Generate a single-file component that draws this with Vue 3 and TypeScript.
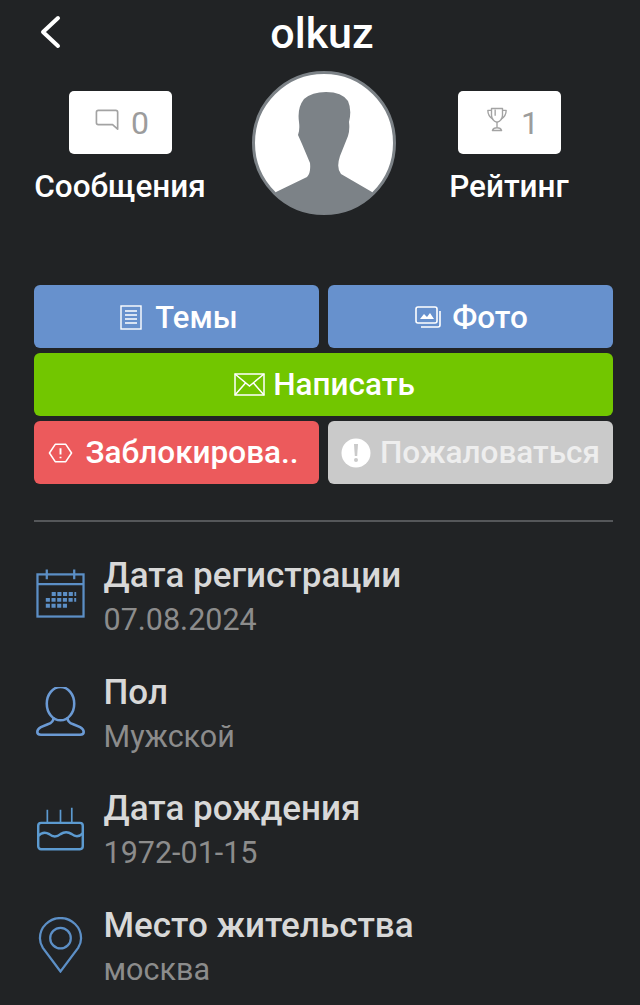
<script setup lang="ts">
const rows = [
  { key: 'cal', title: 'Дата регистрации', value: '07.08.2024' },
  { key: 'user', title: 'Пол', value: 'Мужской' },
  { key: 'cake', title: 'Дата рождения', value: '1972-01-15' },
  { key: 'pin', title: 'Место жительства', value: 'москва' },
]
</script>

<template>
  <div class="page">
    <header class="head">
      <svg class="back" viewBox="0 0 24 34" width="24" height="34" fill="none" stroke="#fff" stroke-width="4" stroke-linecap="round" stroke-linejoin="round">
        <path d="M20 3 L5 17 L20 31" />
      </svg>
      <h1 class="title">olkuz</h1>
    </header>

    <section class="stats">
      <div class="stat">
        <div class="stat-box msg">
          <svg width="25" height="24" viewBox="0 0 26 26" fill="none" stroke="#a3a3a3" stroke-width="1.8" stroke-linejoin="round">
            <path d="M3 2.5 H22 Q24 2.5 24 4.5 V23 L18.5 18 H3 Q1 18 1 16 V4.5 Q1 2.5 3 2.5 Z" />
          </svg>
          <span class="stat-num">0</span>
        </div>
        <div class="stat-label">Сообщения</div>
      </div>

      <svg class="avatar" viewBox="252 71 144 144" width="144" height="144">
        <defs><clipPath id="ava"><circle cx="324" cy="143" r="71" /></clipPath></defs>
        <circle cx="324" cy="143" r="70.5" fill="#fff" stroke="#7c8287" stroke-width="3" />
        <path clip-path="url(#ava)" fill="#7c8287" d="M276 192 L307 177 Q311 173 310 163 L302 144 L298 135 Q300 130 299 122 Q297 108 304 99 Q312 92 326 92 Q342 92 348 101 Q352 110 349 122 Q350 130 348 136 L340 156 Q336 168 341 174 L372 192 L372 220 L276 220 Z" />
      </svg>

      <div class="stat stat-right">
        <div class="stat-box trophy">
          <svg width="22" height="27" viewBox="0 0 24 28" fill="none" stroke="#a3a3a3" stroke-width="1.5" stroke-linejoin="round">
            <path d="M6 2 H18 V9 Q18 15 12 17 Q6 15 6 9 Z" />
            <path d="M6 4 H2 Q2 11 8 14 M18 4 H22 Q22 11 16 14" />
            <path d="M10 3 V10 M12 17 V23 M7 26 Q8 23 12 23 Q16 23 17 26 Z" />
          </svg>
          <span class="stat-num">1</span>
        </div>
        <div class="stat-label">Рейтинг</div>
      </div>
    </section>

    <nav class="actions">
      <a class="btn blue themes">
        <svg width="22" height="25" viewBox="0 0 22 25" fill="none" stroke="#fff" stroke-width="1.4">
          <rect x="1" y="1" width="20" height="23" />
          <path d="M5 6 H17 M5 10 H17 M5 14 H17 M5 18 H17" />
        </svg>
        <span>Темы</span>
      </a>
      <a class="btn blue photo">
        <svg width="26" height="22" viewBox="0 0 26 22" fill="none" stroke="#fff" stroke-width="1.6">
          <rect x="1" y="1" width="21" height="16" rx="2" />
          <path d="M25 5 V19 Q25 21 23 21 H6" />
          <path d="M5 13 L9 8 L12 11 L15 7 L19 13 Z" fill="#fff" stroke="none" />
        </svg>
        <span>Фото</span>
      </a>
      <a class="btn green wide">
        <svg width="31" height="23" viewBox="0 0 31 23" fill="none" stroke="#fff" stroke-width="1.5">
          <rect x="1" y="1" width="29" height="21" />
          <path d="M1 1 L15.5 13 L30 1 M1 22 L11.5 10 M30 22 L19.5 10" />
        </svg>
        <span>Написать</span>
      </a>
      <a class="btn red">
        <svg width="25" height="22" viewBox="0 0 26 22" fill="none" stroke="#fff" stroke-width="1.6" stroke-linejoin="round">
          <path d="M7.5 2 H18.5 L24.5 11 L18.5 20 H7.5 L1.5 11 Z" />
          <path d="M13 6 V12.5 M13 15 V16.5" stroke-width="2" />
        </svg>
        <span>Заблокирова..</span>
      </a>
      <a class="btn grey">
        <svg width="30" height="30" viewBox="0 0 30 30">
          <circle cx="15" cy="15" r="14.5" fill="#fff" />
          <path d="M13 6 H17 L16.2 18 H13.8 Z" fill="#cacaca" />
          <circle cx="15" cy="22" r="2" fill="#cacaca" />
        </svg>
        <span>Пожаловаться</span>
      </a>
    </nav>

    <hr class="divider" />

    <ul class="info">
      <li v-for="row in rows" :key="row.key" class="row">
        <div class="row-icon" :class="'icon-' + row.key">
          <svg v-if="row.key === 'cal'" width="49" height="50" viewBox="0 0 50 50" fill="none" stroke="#5c8fc6" stroke-width="2.3">
            <rect x="1.5" y="5" width="47" height="43" />
            <path d="M1.5 15 H48.5 M11 0 V10 M39 0 V10" />
            <path d="M16 25 H41 M10 31 H41 M10 37 H33" stroke-width="4" stroke-dasharray="4.2 1.6" />
          </svg>
          <svg v-else-if="row.key === 'user'" width="49" height="49" viewBox="0 0 50 50" fill="none" stroke="#6b9ad4" stroke-width="2.6">
            <ellipse cx="25" cy="17" rx="14" ry="17" />
            <path d="M18 31 Q18 36 12 38 L5 41 Q1.3 43 1.3 46 Q1.3 48.7 5 48.7 H45 Q48.7 48.7 48.7 46 Q48.7 43 45 41 L38 38 Q32 36 32 31" />
          </svg>
          <svg v-else-if="row.key === 'cake'" width="49" height="47" viewBox="0 0 50 50" fill="none" stroke="#5c9ad0" stroke-width="2.6">
            <rect x="1.3" y="19" width="47.4" height="28" rx="3" />
            <path d="M1 33 Q7 27 13 31 Q19 36 25 31 Q31 27 37 31 Q43 36 49 30" />
            <path d="M11 5 V19 M25 5 V19 M37 3 V19" stroke-width="1.8" />
          </svg>
          <svg v-else width="49" height="56" viewBox="0 0 50 56" fill="none" stroke="#5c8fc6" stroke-width="2.3">
            <path d="M25 55 L7 31 Q4 26 4 21 A21 20.5 0 0 1 46 21 Q46 26 43 31 Z" />
            <circle cx="25" cy="21" r="10.5" />
          </svg>
        </div>
        <div class="row-text">
          <div class="row-title">{{ row.title }}</div>
          <div class="row-value">{{ row.value }}</div>
        </div>
      </li>
    </ul>
  </div>
</template>

<style>
html, body { background: #212325; }
</style>

<style scoped>
.page {
  width: 640px;
  height: 1005px;
  overflow: hidden;
  box-sizing: border-box;
  background: #212325;
  padding: 0 27px 0 34px;
  font-family: Roboto, "Noto Sans", sans-serif;
  color: #fff;
}
.head {
  position: relative;
  height: 66px;
  display: flex;
  align-items: center;
  justify-content: center;
}
.back {
  position: absolute;
  left: 4px;
  top: 15px;
}
.title {
  margin: 0 0 0 -3px;
  font-size: 43px;
  font-weight: 500;
  line-height: 66px;
}
.stats {
  display: grid;
  grid-template-columns: 172px 189px 201px;
  align-items: start;
  height: 214px;
  padding-top: 5px;
}
.stat {
  display: flex;
  flex-direction: column;
  align-items: center;
  padding-top: 20px;
}
.avatar { margin-left: 45.5px; }
.stat-right { padding-left: 27px; }
.stat-box {
  width: 103px;
  height: 63px;
  box-sizing: border-box;
  background: #fff;
  border-radius: 5px;
  display: flex;
  align-items: center;
  justify-content: center;
  gap: 12px;
  color: #9c9c9c;
  font-size: 32px;
}
.msg { padding-left: 4px; gap: 11px; }
.trophy { padding-left: 7px; gap: 13px; }
.stat-box svg { margin-top: -6px; }
.stat-label {
  margin-top: 14px;
  font-size: 31.5px;
  font-weight: 500;
  line-height: 38px;
  white-space: nowrap;
}
.stat-num { line-height: 1; }
.actions {
  display: grid;
  grid-template-columns: 285px 285px;
  column-gap: 9px;
  row-gap: 5px;
}
.btn {
  height: 63px;
  box-sizing: border-box;
  border-radius: 6px;
  display: flex;
  align-items: center;
  justify-content: center;
  gap: 11px;
  color: #fff;
  font-size: 31.5px;
  font-weight: 500;
  white-space: nowrap;
}
.wide { grid-column: 1 / 3; gap: 8px; padding-left: 2px; }
.blue { background: #6791cd; padding-top: 1px; }
.themes { padding-left: 5px; gap: 13px; font-size: 31px; }
.photo { padding-left: 2px; }
.green { background: #72c600; }
.red { background: #ec5a5c; padding-right: 6px; gap: 12px; }
.grey { background: #cacaca; gap: 9px; color: #eeeeee; }
.divider {
  margin: 36px 0 0;
  border: 0;
  height: 2px;
  background: #55575a;
}
.info {
  list-style: none;
  margin: 0;
  padding: 32px 0 0;
  display: flex;
  flex-direction: column;
  gap: 28.67px;
}
.row {
  display: flex;
  align-items: center;
  gap: 18.5px;
  height: 88px;
}
.row-icon {
  width: 51px;
  display: flex;
  justify-content: flex-end;
  flex: none;
}
.icon-cal { margin-bottom: 8px; }
.icon-user { margin-bottom: 6px; }
.icon-cake { margin-bottom: 6px; }
.icon-pin { margin-bottom: 5px; }
.row-title {
  font-size: 35px;
  font-weight: 500;
  line-height: 44px;
  color: #d8d8d8;
}
.row-value {
  font-size: 30.5px;
  line-height: 44px;
  color: #8c8c8c;
}
</style>
